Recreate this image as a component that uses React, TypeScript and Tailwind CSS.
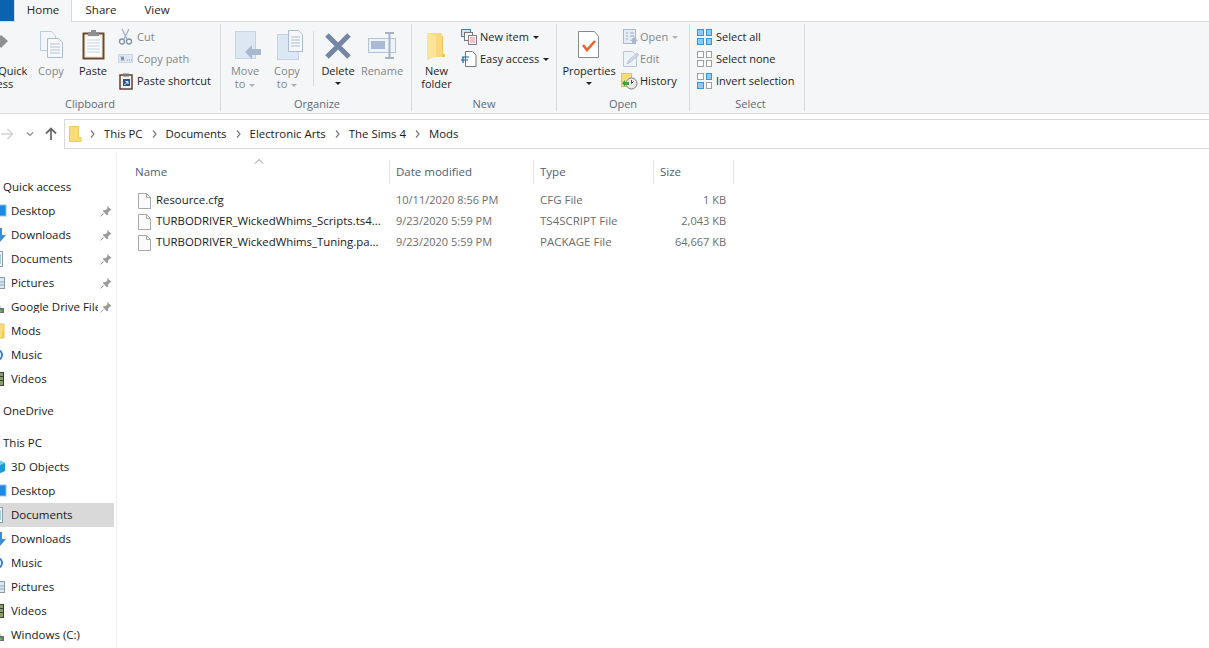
import React from 'react';

const Svg: React.FC<{ size: number; children: React.ReactNode }> = ({ size, children }) => (
  <svg width={size} height={size} viewBox={`0 0 ${size} ${size}`} className="block shrink-0 overflow-visible">
    {children}
  </svg>
);

// ribbon large icons (32px)
const PinLarge = () => (
  <Svg size={32}>
    <path d="M14 11l6-6 7 6-7 7z" fill="#8f8f8f" />
  </Svg>
);
const CopyLarge = () => (
  <Svg size={32}>
    <path d="M5.5 1.5h11l4 4v15h-15z" fill="#f2f5fa" stroke="#bccbe1" />
    <path d="M12.5 8.5h11l4 4v15h-15z" fill="#f7f9fc" stroke="#a9bad4" />
    <path d="M15 14h10M15 17h10M15 20h10M15 23h10" stroke="#b6c2d4" />
  </Svg>
);
const PasteLarge = () => (
  <Svg size={32}>
    <rect x="6.5" y="3.5" width="20" height="25" fill="#f6f1e7" stroke="#6d4a2d" strokeWidth="2" />
    <rect x="9" y="7" width="15" height="19" fill="#fff" />
    <path d="M10 10h13M10 13h13M10 16h13M10 19h13M10 22h13" stroke="#bcd0ec" />
    <rect x="11" y="2" width="11" height="4" fill="#8f8f8f" />
    <rect x="14" y="0" width="5" height="3" fill="#8f8f8f" />
  </Svg>
);
const MoveLarge = () => (
  <Svg size={32}>
    <rect x="6.5" y="1.5" width="20" height="27" fill="#dde7f4" stroke="#c5d3e6" />
    <path d="M16 22l7-7v4h9v6h-9v4z" fill="#a8b8cf" />
  </Svg>
);
const CopyToLarge = () => (
  <Svg size={32}>
    <rect x="6.5" y="4.5" width="21" height="25" fill="#dde7f4" stroke="#c5d3e6" />
    <path d="M17.500 0.500h10l4 4v17h-14z" fill="#f4f7fb" stroke="#a9bad4" />
    <path d="M20 7h9M20 10h9M20 13h9M20 16h9" stroke="#b0bccd" />
  </Svg>
);
const DeleteLarge = () => (
  <Svg size={32}>
    <path d="M5 5l22 22M27 5L5 27" stroke="#7486a6" strokeWidth="5" />
  </Svg>
);
const RenameLarge = () => (
  <Svg size={32}>
    <rect x="2.5" y="8.5" width="27" height="14" fill="#eef3f9" stroke="#b3c3da" />
    <rect x="5" y="11" width="14" height="8" fill="#a9bad4" />
    <path d="M19 3h9M23.500 3v25M19 28h9" stroke="#a3b3c9" strokeWidth="2" />
  </Svg>
);
const FolderLarge = () => (
  <Svg size={32}>
    <path d="M6 3h15v21h3v3H13l-7 3z" fill="#fad97c" />
    <path d="M6 3l9 2v21l-9 4z" fill="#fbe39a" />
    <path d="M21 6h1v18h2v3h-3z" fill="#f0c557" />
  </Svg>
);
const PropertiesLarge = () => (
  <Svg size={32}>
    <path d="M5.5 1.5h16l4 5v21h-20z" fill="#fff" stroke="#8a8a8a" />
    <path d="M10 15l4 5 8-9" fill="none" stroke="#e8622a" strokeWidth="2.5" />
  </Svg>
);

// ribbon small icons (16px)
const CutIcon = () => (
  <Svg size={16}>
    <path d="M4 0l5 10M11 0l-5 10" stroke="#a6b2c2" strokeWidth="1.4" />
    <circle cx="4" cy="12.5" r="2.5" fill="none" stroke="#7e93b0" strokeWidth="1.3" />
    <circle cx="11" cy="12.5" r="2.5" fill="none" stroke="#7e93b0" strokeWidth="1.3" />
  </Svg>
);
const PathIcon = () => (
  <Svg size={16}>
    <rect x="0.5" y="3.5" width="14" height="8" fill="#dfe7f2" stroke="#ccd6e4" />
    <path d="M3 5.5l1 4 1-4 1 4M9 9h.8M11 9h.8M13 9h.8" stroke="#5c7290" strokeWidth="0.8" fill="none" />
  </Svg>
);
const ShortcutIcon = () => (
  <Svg size={16}>
    <rect x="2" y="2" width="12" height="14" fill="#f6f1e7" stroke="#5f4330" strokeWidth="1.5" />
    <rect x="5" y="0.5" width="6" height="3" fill="#777" />
    <rect x="5" y="6" width="7" height="7" fill="#24569c" />
    <path d="M6.5 12l3-3M7.5 8.5h2.5V11" stroke="#fff" fill="none" />
  </Svg>
);
const NewItemIcon = () => (
  <Svg size={16}>
    <rect x="0.5" y="0.5" width="9" height="7" fill="#cfe3f5" stroke="#3d85c0" />
    <rect x="3.5" y="3.5" width="8" height="8" fill="#f4f4f4" stroke="#777" />
    <rect x="7.5" y="6.5" width="8" height="9" fill="#fff" stroke="#8c7a8f" />
    <path d="M9 9h5M9 11h5M9 13h5" stroke="#e28a7a" />
  </Svg>
);
const EasyIcon = () => (
  <Svg size={16}>
    <path d="M4.5 0.5h7l3.5 3.5v11.5h-10.500z" fill="#fff" stroke="#777" />
    <path d="M1 6h7M0 9h7M2 6v6" stroke="#1167b1" strokeWidth="1.2" fill="none" />
  </Svg>
);
const OpenIcon = () => (
  <Svg size={16}>
    <rect x="2.500" y="0.500" width="12" height="14" fill="#e6ecf5" stroke="#a9b8cd" />
    <path d="M5 4h2M9 4h4M5 7h2M9 7h4M5 10h2" stroke="#9aabc2" />
    <path d="M13 8l4 4h-2v3h-4v-3h-2z" fill="#a7b7cd" />
  </Svg>
);
const EditIcon = () => (
  <Svg size={16}>
    <path d="M2.500 0.500h9l4 4v11h-13z" fill="#eef3fa" stroke="#b7c6db" />
    <path d="M6 13l2-4 8-7 1.500 2-8 7z" fill="#cfdbeb" stroke="#a7b7cd" strokeWidth="0.7" />
  </Svg>
);
const HistoryIcon = () => (
  <Svg size={16}>
    <rect x="0.500" y="0.500" width="10" height="13" fill="#fbdc79" stroke="#e6c557" />
    <circle cx="10.500" cy="10.500" r="5.500" fill="#e9e9e9" stroke="#7d7d7d" />
    <path d="M10.500 7v3.500l2 -2" stroke="#555" fill="none" />
    <path d="M1 10l3-3v2h4v3H4v2z" fill="#3fa535" />
  </Svg>
);

const Grid4: React.FC<{ cells: boolean[] }> = ({ cells }) => (
  <div className="grid w-[16px] h-[16px] grid-cols-2 gap-[2px]">
    {cells.map((on, i) => (
      <div key={i} className={on ? 'border border-[#2f97e6] bg-[#8ccaf7]' : 'border border-[#a0a0a0] bg-white'} />
    ))}
  </div>
);

const Caret: React.FC<{ muted?: boolean }> = ({ muted }) => (
  <span
    className={`inline-block w-0 h-0 border-x-[3px] border-x-transparent border-t-[3px] ${
      muted ? 'border-t-[#b0b0b0]' : 'border-t-[#222]'
    }`}
  />
);

const LargeButton: React.FC<{
  width: string;
  icon: React.ReactNode;
  lines: string[];
  disabled?: boolean;
  caret?: boolean;
  caretInline?: boolean;
}> = ({ width, icon, lines, disabled, caret, caretInline }) => (
  <div className={`flex flex-col items-center shrink-0 ${width}`}>
    <div className="h-[38px] pt-[4px]">{icon}</div>
    <div className={`text-center leading-[13px] whitespace-nowrap ${disabled ? 'text-[#83878d]' : 'text-[#1e1e1e]'}`}>
      {lines.map((l, i) => (
        <div key={l}>
          {l}
          {caretInline && i === lines.length - 1 && (
            <span className="ml-[4px] align-middle inline-flex">
              <Caret muted />
            </span>
          )}
        </div>
      ))}
    </div>
    {caret && (
      <div className="flex h-[13px] items-center">
        <Caret />
      </div>
    )}
  </div>
);

const SmallButton: React.FC<{
  icon: React.ReactNode;
  label: string;
  disabled?: boolean;
  caret?: boolean;
  mutedCaret?: boolean;
}> = ({ icon, label, disabled, caret, mutedCaret }) => (
  <div className="flex h-[22px] items-center">
    <div className="w-[15px] mr-[4px] flex items-center">{icon}</div>
    <span className={`whitespace-nowrap mb-[2px] ${disabled ? 'text-[#83878d]' : 'text-[#1e1e1e]'}`}>{label}</span>
    {caret && (
      <span className="ml-[4px] inline-flex">
        <Caret muted={mutedCaret} />
      </span>
    )}
  </div>
);

const RibbonGroup: React.FC<{ width: string; label: string; className?: string; children: React.ReactNode }> = ({
  width,
  label,
  className,
  children,
}) => (
  <div className={`flex flex-col shrink-0 h-[87px] mt-[2px] border-r border-[#dadbdc] ${width} ${className ?? ''}`}>
    <div className="flex h-[73px] pt-[2px]">{children}</div>
    <div className="text-center text-[#5f6a76] leading-[13px]">{label}</div>
  </div>
);

const Chevron = () => (
  <svg width="5" height="8" viewBox="0 0 5 8" className="shrink-0">
    <path d="M1 0.500l3 3.500-3 3.500" stroke="#7a7a7a" strokeWidth="1.200" fill="none" />
  </svg>
);

const crumbs = ['This PC', 'Documents', 'Electronic Arts', 'The Sims 4', 'Mods'];

// tree icons, only their right edge shows because the pane is scrolled
const DesktopIcon = () => (
  <Svg size={16}>
    <rect x="0" y="2" width="16" height="11" fill="#1e88e5" stroke="#8fc1ee" />
  </Svg>
);
const DownloadIcon = () => (
  <Svg size={16}>
    <path d="M8 1h4v7h4l-6 7-7-7h5z" fill="#3a8bd8" />
  </Svg>
);
const DocumentIcon = () => (
  <Svg size={16}>
    <rect x="0.500" y="0.500" width="12" height="15" fill="#f5f8fc" stroke="#8d9aa8" />
    <path d="M3 4h8M3 6h8M3 8h8M3 10h8M3 12h8" stroke="#5a9bd5" />
  </Svg>
);
const PictureIcon = () => (
  <Svg size={16}>
    <rect x="0.500" y="2.500" width="14" height="11" fill="#dfe7f0" stroke="#8d9aa8" />
    <path d="M1 7h13M1 10h13" stroke="#8fa8c4" />
  </Svg>
);
const DriveIcon = () => (
  <Svg size={16}>
    <path d="M2 9l2-3h6l2 3z" fill="#cfd3d8" />
    <rect x="0" y="9" width="14" height="5" fill="#6d7378" />
    <rect x="10" y="11" width="2" height="2" fill="#59c13b" />
  </Svg>
);
const ModsIcon = () => (
  <Svg size={16}>
    <path d="M1 1h13v14H1z" fill="#fbdc79" stroke="#e8c45b" />
    <path d="M12 8h2v7h-2z" fill="#f2c94c" />
  </Svg>
);
const MusicIcon = () => (
  <Svg size={16}>
    <circle cx="7" cy="8" r="5" fill="none" stroke="#2b7fd0" strokeWidth="2" />
  </Svg>
);
const VideoIcon = () => (
  <Svg size={16}>
    <rect x="0" y="1" width="14" height="14" fill="#3c3c3c" />
    <path d="M10 2h3v3h-3zM10 6h3v3h-3zM10 10h3v4h-3z" fill="#8aa06a" />
  </Svg>
);
const CubeIcon = () => (
  <Svg size={16}>
    <path d="M8 1l7 3v8l-7 3-7-3V4z" fill="#1a9bd7" />
    <path d="M8 1l7 3-7 3-7-3z" fill="#6fd0f2" />
  </Svg>
);
const PinIcon = () => (
  <svg width="12" height="12" viewBox="0 0 12 12" className="shrink-0">
    <path d="M7 0.500l4.500 4.500-1.300 0.500-2 2-0.300 2.200-1 0.500-4-4 0.500-1 2.200-0.300 2-2z" fill="#9c9c9c" />
    <path d="M3.500 8.500l-3 3" stroke="#9c9c9c" />
  </svg>
);

type NavItem = { label: string; icon: React.ReactNode; pinned?: boolean; selected?: boolean };

const quickAccess: NavItem[] = [
  { label: 'Desktop', icon: <DesktopIcon />, pinned: true },
  { label: 'Downloads', icon: <DownloadIcon />, pinned: true },
  { label: 'Documents', icon: <DocumentIcon />, pinned: true },
  { label: 'Pictures', icon: <PictureIcon />, pinned: true },
  { label: 'Google Drive File Stream', icon: <DriveIcon />, pinned: true },
  { label: 'Mods', icon: <ModsIcon /> },
  { label: 'Music', icon: <MusicIcon /> },
  { label: 'Videos', icon: <VideoIcon /> },
];

const thisPc: NavItem[] = [
  { label: '3D Objects', icon: <CubeIcon /> },
  { label: 'Desktop', icon: <DesktopIcon /> },
  { label: 'Documents', icon: <DocumentIcon />, selected: true },
  { label: 'Downloads', icon: <DownloadIcon /> },
  { label: 'Music', icon: <MusicIcon /> },
  { label: 'Pictures', icon: <PictureIcon /> },
  { label: 'Videos', icon: <VideoIcon /> },
  { label: 'Windows (C:)', icon: <DriveIcon /> },
];

const NavRow: React.FC<{ item: NavItem }> = ({ item }) => (
  <div className={`flex h-6 w-[114px] items-center overflow-hidden ${item.selected ? 'bg-[#d9d9d9]' : ''}`}>
    <div className="ml-[-10px] mr-[5px] shrink-0">{item.icon}</div>
    <div className="w-[87px] shrink-0 overflow-hidden whitespace-nowrap text-[#1a1a1a]">{item.label}</div>
    {item.pinned && (
      <div className="ml-[2px]">
        <PinIcon />
      </div>
    )}
  </div>
);

const NavHeader: React.FC<{ label: string }> = ({ label }) => (
  <div className="flex h-6 items-center pl-[3px] text-[#1a1a1a]">{label}</div>
);

const FileIcon = () => (
  <svg width="13" height="16" viewBox="0 0 13 16" className="shrink-0">
    <path d="M0.500 0.500h8l4 4v11h-12z" fill="#fbfbfb" stroke="#a8a8a8" />
    <path d="M8.500 0.500v4h4" fill="none" stroke="#a8a8a8" />
  </svg>
);

const files = [
  { name: 'Resource.cfg', date: '10/11/2020 8:56 PM', type: 'CFG File', size: '1 KB' },
  { name: 'TURBODRIVER_WickedWhims_Scripts.ts4...', date: '9/23/2020 5:59 PM', type: 'TS4SCRIPT File', size: '2,043 KB' },
  { name: 'TURBODRIVER_WickedWhims_Tuning.pa...', date: '9/23/2020 5:59 PM', type: 'PACKAGE File', size: '64,667 KB' },
];

const columns = 'grid grid-cols-[262px_144px_120px_80px]';

const App: React.FC = () => {
  return (
    <div className="h-screen w-full overflow-hidden bg-white font-['Open_Sans',sans-serif] text-[11.5px] leading-none flex flex-col">
      {/* tabs */}
      <div className="flex h-[22px] shrink-0 border-b border-[#dadbdc] text-[#262626]">
        <div className="h-[21px] w-[14px] bg-[#0a63b0]" />
        <div className="flex h-[22px] w-[58px] items-center justify-center border-x border-[#dadbdc] bg-[#f5f6f7] pb-[3px]">Home</div>
        <div className="flex h-[21px] w-[58px] items-center justify-center pb-[2px]">Share</div>
        <div className="flex h-[21px] w-[54px] items-center justify-center pb-[2px]">View</div>
      </div>

      {/* ribbon */}
      <div className="flex h-[92px] shrink-0 border-b border-[#dadbdc] bg-[#f5f6f7] overflow-hidden text-[11px]">
        <RibbonGroup width="w-[261px]" label="Clipboard" className="ml-[-40px]">
          <LargeButton width="w-[73px]" icon={<PinLarge />} lines={['Pin to Quick', 'access']} />
          <LargeButton width="w-[36px]" icon={<CopyLarge />} lines={['Copy']} disabled />
          <LargeButton width="w-[48px]" icon={<PasteLarge />} lines={['Paste']} />
          <div className="ml-[1px]">
            <SmallButton icon={<CutIcon />} label="Cut" disabled />
            <SmallButton icon={<PathIcon />} label="Copy path" disabled />
            <SmallButton icon={<ShortcutIcon />} label="Paste shortcut" />
          </div>
        </RibbonGroup>
        <RibbonGroup width="w-[191px]" label="Organize" className="pl-[2px]">
          <LargeButton width="w-[44px]" icon={<MoveLarge />} lines={['Move', 'to']} disabled caretInline />
          <LargeButton width="w-[40px]" icon={<CopyToLarge />} lines={['Copy', 'to']} disabled caretInline />
          <div className="ml-[6px] mt-[5px] h-[55px] w-px bg-[#dadbdc]" />
          <LargeButton width="w-[46px] ml-[1px]" icon={<DeleteLarge />} lines={['Delete']} caret />
          <LargeButton width="w-[42px]" icon={<RenameLarge />} lines={['Rename']} disabled />
        </RibbonGroup>
        <RibbonGroup width="w-[145px]" label="New">
          <LargeButton width="w-[49px]" icon={<FolderLarge />} lines={['New', 'folder']} />
          <div>
            <SmallButton icon={<NewItemIcon />} label="New item" caret />
            <SmallButton icon={<EasyIcon />} label="Easy access" caret />
          </div>
        </RibbonGroup>
        <RibbonGroup width="w-[133px]" label="Open">
          <LargeButton width="w-[64px]" icon={<PropertiesLarge />} lines={['Properties']} caret />
          <div>
            <SmallButton icon={<OpenIcon />} label="Open" disabled caret mutedCaret />
            <SmallButton icon={<EditIcon />} label="Edit" disabled />
            <SmallButton icon={<HistoryIcon />} label="History" />
          </div>
        </RibbonGroup>
        <RibbonGroup width="w-[115px]" label="Select" className="pl-[7px]">
          <div>
            <SmallButton icon={<Grid4 cells={[true, true, true, true]} />} label="Select all" />
            <SmallButton icon={<Grid4 cells={[false, false, false, false]} />} label="Select none" />
            <SmallButton icon={<Grid4 cells={[false, true, true, false]} />} label="Invert selection" />
          </div>
        </RibbonGroup>
      </div>

      {/* address bar */}
      <div className="flex h-[40px] shrink-0 items-center">
        <svg width="64" height="16" viewBox="0 0 64 16" className="shrink-0">
          <path d="M1 8h11M7.500 3l5 5-5 5" stroke="#d4d4d4" strokeWidth="1.500" fill="none" />
          <path d="M27 6.500l3 3 3-3" stroke="#8a8a8a" strokeWidth="1.200" fill="none" />
          <path d="M51 14V3M46 7.500l5-5 5 5" stroke="#6b6b6b" strokeWidth="1.800" fill="none" />
        </svg>
        <div className="flex h-[30px] flex-1 items-center border border-r-0 border-[#d9d9d9] pl-[4px] text-[#1a1a1a] text-[11.4px]">
          <svg width="13" height="16" viewBox="0 0 13 16" className="shrink-0">
            <path d="M0.500 0.500h9v11h2.500v4h-11.500z" fill="#fbdc79" stroke="#edc95f" />
          </svg>
          <div className="flex items-center pb-[1px] ml-[-1px]">
            {crumbs.map((c) => (
              <div key={c} className="flex items-center">
                <div className="ml-[9px] mr-[9px]">
                  <Chevron />
                </div>
                <span className="whitespace-nowrap">{c}</span>
              </div>
            ))}
          </div>
        </div>
      </div>

      {/* body */}
      <div className="flex flex-1 min-h-0">
        <div className="w-[117px] shrink-0 overflow-hidden border-r border-[#f0f0f0] pt-[21px]">
          <NavHeader label="Quick access" />
          {quickAccess.map((item) => (
            <NavRow key={item.label} item={item} />
          ))}
          <div className="mt-2">
            <NavHeader label="OneDrive" />
          </div>
          <div className="mt-2">
            <NavHeader label="This PC" />
          </div>
          {thisPc.map((item) => (
            <NavRow key={item.label} item={item} />
          ))}
        </div>

        <div className="flex-1 pl-[11px] pt-[6px]">
          <div className={`${columns} relative h-[24px] text-[#4c607a]`}>
            <svg width="10" height="5" viewBox="0 0 10 5" className="absolute left-[126px] top-[-1px]">
              <path d="M1 4.500l4-4 4 4" stroke="#8a8a8a" fill="none" />
            </svg>
            {['Name', 'Date modified', 'Type', 'Size'].map((h, i) => (
              <div key={h} className={`flex items-center border-r border-[#e5e5e5] ${i === 0 ? 'pl-[7px]' : 'pl-[6px]'}`}>
                {h}
              </div>
            ))}
          </div>
          <div className="pt-[6px]">
            {files.map((f) => (
              <div key={f.name} className={`${columns} h-[21px] items-center text-[#6d6d6d]`}>
                <div className="flex items-center pl-[10px] text-[#1a1a1a]">
                  <FileIcon />
                  <span className="ml-[5px] mb-[1px] whitespace-nowrap text-[11.4px]">{f.name}</span>
                </div>
                <div className="pl-[6px] mb-[2px] text-[11px]">{f.date}</div>
                <div className="pl-[6px] mb-[1px]">{f.type}</div>
                <div className="pr-[8px] mb-[2px] text-right text-[11px]">{f.size}</div>
              </div>
            ))}
          </div>
        </div>
      </div>
    </div>
  );
};

export default App;
